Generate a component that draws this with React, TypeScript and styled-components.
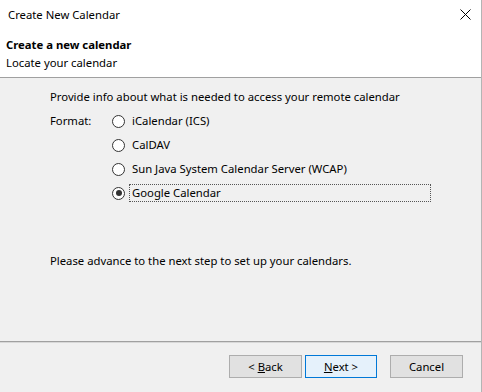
import styled, { createGlobalStyle } from 'styled-components';

const GlobalStyle = createGlobalStyle`
  html, body {
    margin: 0;
    padding: 0;
    background: #ffffff;
  }
  body {
    font-family: "Noto Sans", "Open Sans", sans-serif;
    font-size: 11.3px;
    color: #000;
  }
`;

const Window = styled.div`
  width: 481px;
  height: 392px;
  border-right: 1px solid #b4b4b4;
  display: flex;
  flex-direction: column;
  background: #f0f0f0;
`;

const TitleBar = styled.div`
  height: 30px;
  background: #fff;
  display: flex;
  align-items: center;
  justify-content: space-between;
  padding: 0 10px 0 8px;
`;

const TitleText = styled.span`
  line-height: 14px;
`;

const CloseIcon = styled.svg`
  width: 11px;
  height: 11px;
  margin-top: -1px;
`;

const Header = styled.div`
  background: #fff;
  height: 48px;
  padding: 6px 6px 0;
  border-bottom: 1px solid #a0a0a0;
  box-sizing: border-box;
`;

const HeaderTitle = styled.div`
  font-weight: 700;
  line-height: 18px;
`;

const HeaderSub = styled.div`
  line-height: 17px;
`;

const Body = styled.div`
  flex: 1;
  padding: 10px 0 0 50px;
  display: flex;
  flex-direction: column;
`;

const Para = styled.div<{ $gap?: number }>`
  line-height: 17px;
  margin-top: ${(p) => p.$gap ?? 0}px;
`;

const FormatRow = styled.div`
  display: flex;
  margin-top: 6px;
`;

const FormatLabel = styled.div`
  width: 62px;
  line-height: 17px;
  padding-top: 1px;
`;

const Options = styled.div`
  display: flex;
  flex-direction: column;
  gap: 6px;
  padding-top: 1px;
`;

const Option = styled.label`
  display: flex;
  align-items: center;
  height: 18px;
`;

const Radio = styled.span<{ $checked?: boolean }>`
  width: 11px;
  height: 11px;
  border: 1px solid #333;
  border-radius: 50%;
  background: #fff;
  display: flex;
  align-items: center;
  justify-content: center;
  flex-shrink: 0;
  &::after {
    content: '';
    width: 6px;
    height: 6px;
    border-radius: 50%;
    background: ${(p) => (p.$checked ? '#333' : 'transparent')};
  }
`;

const OptionText = styled.span<{ $focused?: boolean }>`
  margin-left: 4px;
  padding: 0 2px;
  line-height: 16px;
  border: 1px dotted ${(p) => (p.$focused ? '#555' : 'transparent')};
  width: ${(p) => (p.$focused ? '296px' : 'auto')};
`;

const Footer = styled.div`
  height: 51px;
  border-top: 1px solid #a0a0a0;
  box-shadow: inset 0 1px 0 #d8d8d8;
  display: flex;
  justify-content: flex-end;
  align-items: flex-start;
  padding: 13px 18px 0 0;
  box-sizing: border-box;
`;

const Button = styled.button<{ $primary?: boolean; $space?: number; $w?: number }>`
  width: ${(p) => p.$w ?? 73}px;
  height: 23px;
  margin-left: ${(p) => p.$space ?? 0}px;
  font-family: inherit;
  font-size: 11.3px;
  color: #000;
  background: ${(p) => (p.$primary ? '#e5f1fb' : '#e1e1e1')};
  border: 1px solid ${(p) => (p.$primary ? '#0078d7' : '#adadad')};
  padding: 0;
  u {
    text-decoration: underline;
  }
`;

export default function App() {
  return (
    <>
      <GlobalStyle />
      <Window>
        <TitleBar>
          <TitleText>Create New Calendar</TitleText>
          <CloseIcon viewBox="0 0 11 11">
            <path d="M0.5 0.5 L10.5 10.5 M10.5 0.5 L0.5 10.5" stroke="#000" strokeWidth="1" fill="none" />
          </CloseIcon>
        </TitleBar>
        <Header>
          <HeaderTitle>Create a new calendar</HeaderTitle>
          <HeaderSub>Locate your calendar</HeaderSub>
        </Header>
        <Body>
          <Para>Provide info about what is needed to access your remote calendar</Para>
          <FormatRow>
            <FormatLabel>Format:</FormatLabel>
            <Options>
              <Option><Radio /><OptionText>iCalendar (ICS)</OptionText></Option>
              <Option><Radio /><OptionText>CalDAV</OptionText></Option>
              <Option><Radio /><OptionText>Sun Java System Calendar Server (WCAP)</OptionText></Option>
              <Option><Radio $checked /><OptionText $focused>Google Calendar</OptionText></Option>
            </Options>
          </FormatRow>
          <Para $gap={50}>Please advance to the next step to set up your calendars.</Para>
        </Body>
        <Footer>
          <Button>&lt; <u>B</u>ack</Button>
          <Button $primary $space={3} $w={72}><u>N</u>ext &gt;</Button>
          <Button $space={13}>Cancel</Button>
        </Footer>
      </Window>
    </>
  );
}
